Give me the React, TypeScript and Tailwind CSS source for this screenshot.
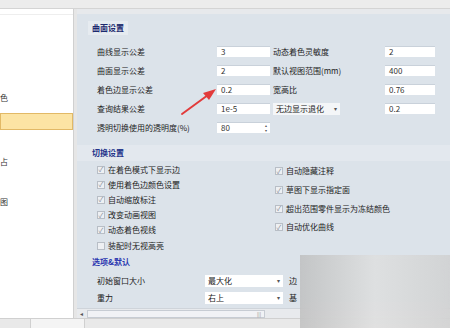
const font = { fontFamily: '"Noto Sans CJK SC", "Noto Sans", sans-serif' };

function Field({ value, spin }: { value: string; spin?: boolean }) {
  return (
    <div className="flex h-[11px] items-center justify-between bg-white pl-1 pr-[3px] text-[8px] leading-none text-[#333] shadow-[inset_0_1px_0_#c9d1da]">
      <span>{value}</span>
      {spin && <span className="flex flex-col text-[4px] leading-[5px] text-[#555]">▴<br />▾</span>}
    </div>
  );
}

function Check({ label, on = true }: { label: string; on?: boolean }) {
  return (
    <div className="flex items-center gap-[3px]">
      <span className="flex h-[8px] w-[8px] items-center justify-center border border-[#b8bec6] bg-[#eef0f3] text-[7px] leading-none text-[#8a939c]">
        {on ? '✓' : ''}
      </span>
      <span className="text-[8px] leading-none text-[#222]">{label}</span>
    </div>
  );
}

function Header({ text, band, color }: { text: string; band?: boolean; color: string }) {
  return (
    <div className={`flex h-[16px] items-center pl-[11px] ${band ? 'bg-[#e3e8ee]' : ''}`}>
      <span className={`px-[4px] text-[8px] font-bold leading-none ${color}`}>{text}</span>
    </div>
  );
}

export default function App() {
  const rows1 = [
    ['曲线显示公差', '3', '动态着色灵敏度', '2'],
    ['曲面显示公差', '2', '默认视图范围(mm)', '400'],
    ['着色边显示公差', '0.2', '宽高比', '0.76'],
    ['查询结果公差', '1e-5', '', '0.2'],
  ];
  const left = ['在着色模式下显示边', '使用着色边颜色设置', '自动缩放标注', '改变动画视图', '动态着色视线'];
  const right = ['自动隐藏注释', '草图下显示指定面', '超出范围零件显示为冻结颜色', '自动优化曲线'];

  return (
    <div className="relative flex h-[328px] w-[450px] flex-col overflow-hidden bg-[#ececec]" style={font}>
      {/* top strip */}
      <div className="h-[9px] border-b border-[#d4d4d4] bg-[#ececec]" />

      <div className="flex h-[309px]">
        {/* left tree */}
        <div className="flex w-[73px] flex-col border-t-[5px] border-white bg-white">
          <div className="h-[1px] bg-[#eeeeee]" />
          <div className="h-[78px]" />
          <div className="h-[10px] text-[8px] leading-[10px] text-[#333]">色</div>
          <div className="h-[10px]" />
          <div className="h-[17px] border border-[#e2b966] bg-[#fce4a4]" />
          <div className="h-[27px]" />
          <div className="h-[10px] text-[8px] leading-[10px] text-[#333]">占</div>
          <div className="h-[30px]" />
          <div className="h-[10px] text-[8px] leading-[10px] text-[#333]">图</div>
        </div>
        <div className="w-[4px] border-l border-[#d0d0d0] bg-[#e6e6e6]" />

        {/* right settings */}
        <div className="flex flex-1 flex-col">
          <div className="h-[5px] bg-[#e7e9ec]" />
          <div className="flex h-[294px] flex-col overflow-hidden bg-[#dce3ea] pt-[6px]">
            <div className="flex h-[16px] items-center pl-[11px]">
              <span className="bg-[#e6ebf0] px-[4px] py-[3px] text-[8px] font-bold leading-none text-[#1d2a6e]">曲面设置</span>
            </div>
            <div className="mt-[6px] pl-[20px]">
              {rows1.map((r, i) => (
                <div key={i} className="grid h-[19px] grid-cols-[120px_53px_115px_50px] items-center">
                  <span className="text-[8px] leading-none text-[#222]">{r[0]}</span>
                  <Field value={r[1]} />
                  {i === 3 ? (
                    <div className="ml-[3px] flex h-[12px] w-[67px] items-center justify-between bg-[#f4f6f8] px-[3px] text-[8px] leading-none text-[#222]">
                      <span>无边显示退化</span>
                      <span className="text-[6px] text-[#555]">▾</span>
                    </div>
                  ) : (
                    <span className="pl-[3px] text-[8px] leading-none text-[#222]">{r[2]}</span>
                  )}
                  <Field value={r[3]} />
                </div>
              ))}
              <div className="grid h-[19px] grid-cols-[120px_53px] items-center">
                <span className="text-[8px] leading-none text-[#222]">透明切换使用的透明度(%)</span>
                <Field value="80" spin />
              </div>
            </div>

            <div className="mt-[8px]">
              <Header text="切换设置" band color="text-[#24338a]" />
            </div>
            <div className="flex pl-[20px] pt-[1px]">
              <div className="flex w-[178px] flex-col">
                {left.map((t) => (
                  <div key={t} className="flex h-[15.2px] items-center">
                    <Check label={t} />
                  </div>
                ))}
                <div className="flex h-[15.2px] items-center">
                  <Check label="装配时无视高亮" on={false} />
                </div>
              </div>
              <div className="flex flex-col">
                {right.map((t) => (
                  <div key={t} className="flex h-[18.7px] items-center">
                    <Check label={t} />
                  </div>
                ))}
              </div>
            </div>

            <div className="mt-[1px]">
              <Header text="选项&默认" color="text-[#2a36b0]" />
            </div>
            <div className="pl-[20px] pt-[2px]">
              {[
                ['初始窗口大小', '最大化', '边'],
                ['重力', '右上', '基'],
              ].map((r) => (
                <div key={r[0]} className="grid h-[17px] grid-cols-[108px_78px_auto] items-center">
                  <span className="text-[8px] leading-none text-[#222]">{r[0]}</span>
                  <div className="flex h-[12px] items-center justify-between bg-white px-[3px] text-[8px] leading-none text-[#222]">
                    <span>{r[1]}</span>
                    <span className="text-[6px] text-[#555]">▾</span>
                  </div>
                  <span className="pl-[6px] text-[8px] leading-none text-[#222]">{r[2]}</span>
                </div>
              ))}
            </div>
          </div>
          {/* horizontal scrollbar */}
          <div className="flex h-[10px] items-center border-t border-[#cfd4da] bg-[#e8eaed] pl-[3px]">
            <span className="w-[7px] text-[6px] leading-none text-[#555]">◂</span>
            <div className="flex h-[8px] w-[178px] items-center justify-end border border-[#c7ccd3] bg-[#f1f2f5] pr-[3px]">
              <span className="text-[5px] leading-none text-[#888]">|||</span>
            </div>
          </div>
        </div>
      </div>

      {/* bottom strip */}
      <div className="flex h-[10px] border-t border-[#d0d0d0] bg-[#e9e9e9]">
        <div className="ml-[30px] w-[55px] border-x border-[#d0d0d0] bg-[#f4f4f4]" />
      </div>

      {/* red arrow */}
      <svg className="absolute left-0 top-0" width="450" height="328">
        <line x1="182" y1="114" x2="208" y2="95" stroke="#e23b3b" strokeWidth="2" strokeLinecap="round" />
        <polygon points="216,89 203,93 209,100" fill="#e23b3b" />
      </svg>

      {/* blurred watermark area */}
      <div className="absolute left-[300px] top-[255px] h-[73px] w-[150px] bg-gradient-to-r from-[#bdbdbd]/80 via-[#dedede]/80 to-[#cfcfcf]/80 backdrop-blur-sm" />
    </div>
  );
}
